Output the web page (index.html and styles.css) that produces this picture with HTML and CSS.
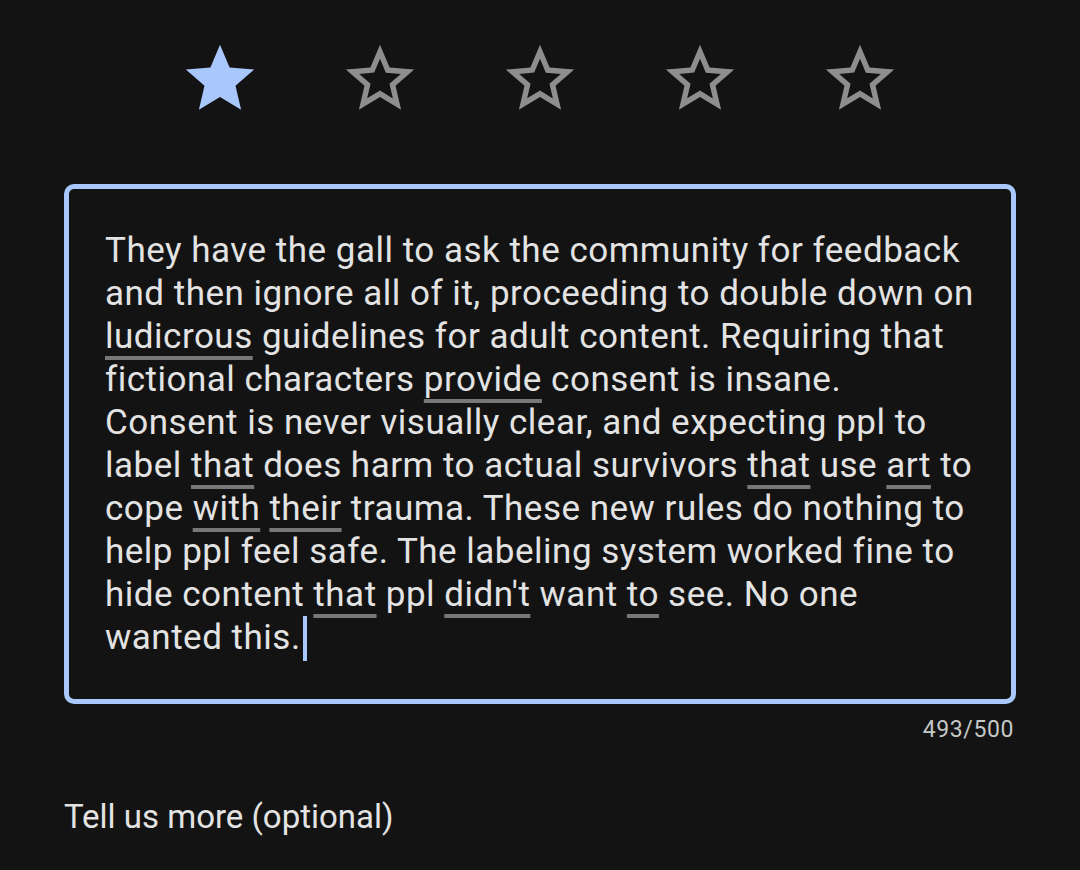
FILE: index.html
```html
<!DOCTYPE html>
<html lang="en">
<head>
    <meta charset="UTF-8">
    <meta name="viewport" content="width=device-width, initial-scale=1.0">
    <title>Rate this app</title>
    <link rel="stylesheet" href="styles.css">
</head>
<body>
    <div class="stars">
        <svg class="star filled" viewBox="0 0 24 24"><path d="M12 17.27L18.18 21l-1.64-7.03L22 9.24l-7.19-.61L12 2 9.19 8.63 2 9.24l5.46 4.73L5.82 21z"/></svg>
        <svg class="star" viewBox="0 0 24 24"><path d="M22 9.24l-7.19-.62L12 2 9.19 8.63 2 9.24l5.46 4.73L5.82 21 12 17.27 18.18 21l-1.63-7.03L22 9.24zM12 15.4l-3.76 2.27 1-4.28-3.32-2.88 4.38-.38L12 6.1l1.71 4.04 4.38.38-3.32 2.88 1 4.28L12 15.4z"/></svg>
        <svg class="star" viewBox="0 0 24 24"><path d="M22 9.24l-7.19-.62L12 2 9.19 8.63 2 9.24l5.46 4.73L5.82 21 12 17.27 18.18 21l-1.63-7.03L22 9.24zM12 15.4l-3.76 2.27 1-4.28-3.32-2.88 4.38-.38L12 6.1l1.71 4.04 4.38.38-3.32 2.88 1 4.28L12 15.4z"/></svg>
        <svg class="star" viewBox="0 0 24 24"><path d="M22 9.24l-7.19-.62L12 2 9.19 8.63 2 9.24l5.46 4.73L5.82 21 12 17.27 18.18 21l-1.63-7.03L22 9.24zM12 15.4l-3.76 2.27 1-4.28-3.32-2.88 4.38-.38L12 6.1l1.71 4.04 4.38.38-3.32 2.88 1 4.28L12 15.4z"/></svg>
        <svg class="star" viewBox="0 0 24 24"><path d="M22 9.24l-7.19-.62L12 2 9.19 8.63 2 9.24l5.46 4.73L5.82 21 12 17.27 18.18 21l-1.63-7.03L22 9.24zM12 15.4l-3.76 2.27 1-4.28-3.32-2.88 4.38-.38L12 6.1l1.71 4.04 4.38.38-3.32 2.88 1 4.28L12 15.4z"/></svg>
    </div>

    <div class="review">
        <div class="review-box">
            <div class="line">They have the gall to ask the community for feedback</div>
            <div class="line">and then ignore all of it, proceeding to double down on</div>
            <div class="line"><span class="sp">ludicrous</span> guidelines for adult content. Requiring that</div>
            <div class="line">fictional characters <span class="sp">provide</span> consent is insane.</div>
            <div class="line">Consent is never visually clear, and expecting ppl to</div>
            <div class="line">label <span class="sp">that</span> does harm to actual survivors <span class="sp">that</span> use <span class="sp">art</span> to</div>
            <div class="line">cope <span class="sp">with</span> <span class="sp">their</span> trauma. These new rules do nothing to</div>
            <div class="line">help ppl feel safe. The labeling system worked fine to</div>
            <div class="line">hide content <span class="sp">that</span> ppl <span class="sp">didn't</span> want <span class="sp">to</span> see. No one</div>
            <div class="line">wanted this.<span class="cursor"></span></div>
        </div>
        <div class="counter">493/500</div>
    </div>

    <div class="more">Tell us more (optional)</div>
</body>
</html>
```

FILE: styles.css
```css
body {
    margin: 0;
    background-color: #131313;
    font-family: Roboto, "Noto Sans", sans-serif;
    color: #e3e3e3;
}
.stars {
    display: flex;
    justify-content: center;
    gap: 78px;
    padding-top: 38px;
}
.star {
    width: 82px;
    height: 82px;
    fill: #8e8e8e;
}
.star.filled {
    fill: #a8c7fa;
}
.review {
    padding: 0 64px;
    margin-top: 64px;
}
.review-box {
    border: 5px solid #a8c7fa;
    border-radius: 10px;
    padding: 40px 36px 0 36px;
    height: 520px;
    box-sizing: border-box;
}
.line {
    font-size: 35px;
    line-height: 43px;
    white-space: nowrap;
    letter-spacing: 0.5px;
}
.sp {
    text-decoration: underline;
    text-decoration-color: #777777;
    text-decoration-thickness: 4px;
    text-underline-offset: 8px;
}
.cursor {
    display: inline-block;
    width: 4px;
    height: 45px;
    background-color: #a8c7fa;
    vertical-align: -12px;
    margin-left: 2px;
}
.counter {
    text-align: right;
    font-size: 23px;
    letter-spacing: 0.6px;
    color: #c4c7c5;
    margin-top: 12px;
    padding-right: 2px;
}
.more {
    padding-left: 64px;
    margin-top: 54px;
    font-size: 33px;
}
```
